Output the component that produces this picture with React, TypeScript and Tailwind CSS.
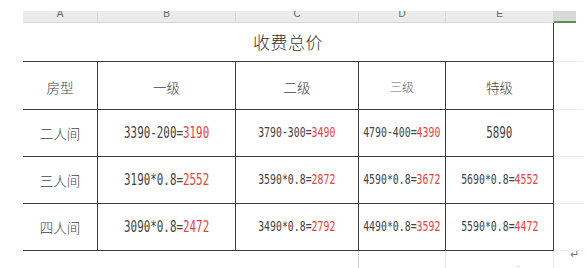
import React from 'react';

const line = 'border-[#3e3e3e]';

const cols = ['A', 'B', 'C', 'D', 'E'];
const widths = ['w-[75px]', 'w-[138px]', 'w-[123px]', 'w-[87px]', 'w-[108px]'];

type Cell = { base: string; result?: string; big?: boolean };

const rows: { label: string; cells: Cell[] }[] = [
  {
    label: '二人间',
    cells: [
      { base: '3390-200=', result: '3190', big: true },
      { base: '3790-300=', result: '3490' },
      { base: '4790-400=', result: '4390' },
      { base: '5890', big: true },
    ],
  },
  {
    label: '三人间',
    cells: [
      { base: '3190*0.8=', result: '2552', big: true },
      { base: '3590*0.8=', result: '2872' },
      { base: '4590*0.8=', result: '3672' },
      { base: '5690*0.8=', result: '4552' },
    ],
  },
  {
    label: '四人间',
    cells: [
      { base: '3090*0.8=', result: '2472', big: true },
      { base: '3490*0.8=', result: '2792' },
      { base: '4490*0.8=', result: '3592' },
      { base: '5590*0.8=', result: '4472' },
    ],
  },
];

const Num: React.FC<{ cell: Cell }> = ({ cell }) => (
  <span
    className={`inline-block whitespace-nowrap scale-x-[0.68] text-[#444] font-['DejaVu_Sans_Mono',monospace] ${
      cell.big ? 'text-[16px]' : 'text-[14.5px]'
    }`}
  >
    {cell.base}
    {cell.result && <span className="text-[#e8413f]">{cell.result}</span>}
  </span>
);

const App: React.FC = () => {
  return (
    <div className="w-[587px] h-[268px] bg-white overflow-hidden relative pt-[11px] font-['Noto_Sans_CJK_SC',sans-serif] font-light">
      {/* column letters */}
      <div className="flex pl-[23px]">
        {cols.map((c, i) => (
          <div
            key={c}
            className={`${widths[i]} h-[12px] overflow-hidden bg-[#ebebeb] border-b border-r border-[#d6d6d6] flex justify-center`}
          >
            <span className="text-[10px] leading-[10px] -translate-y-[2px] text-[#666] font-['Liberation_Sans',sans-serif]">
              {c}
            </span>
          </div>
        ))}
        <div className="w-[22px] h-[12px] bg-[#d9d9d9] border-b-2 border-[#5e9150]" />
      </div>

      {/* title */}
      <div className="flex pl-[23px]">
        <div className={`w-[531px] h-[39px] border-b border-r ${line} flex items-center justify-center`}>
          <span className="text-[17px] text-[#333] tracking-[0.5px]">收费总价</span>
        </div>
        <div className="w-[29px] border-b border-[#ececec]" />
      </div>

      {/* header row */}
      <div className="flex pl-[23px] h-[48px]">
        {['房型', '一级', '二级', '三级', '特级'].map((h, i) => (
          <div
            key={h}
            className={`${widths[i]} border-b border-r ${line} flex items-center justify-center pt-[3px]`}
          >
            <span className={`${i === 3 ? 'text-[12px] text-[#666]' : 'text-[13.5px] text-[#444]'}`}>{h}</span>
          </div>
        ))}
        <div className="w-[29px] border-b border-[#ececec]" />
      </div>

      {rows.map((r) => (
        <div key={r.label} className="flex pl-[23px] h-[47px]">
          <div className={`${widths[0]} border-b border-r ${line} flex items-center justify-center`}>
            <span className="text-[13.5px] text-[#444]">{r.label}</span>
          </div>
          {r.cells.map((c, i) => (
            <div
              key={i}
              className={`${widths[i + 1]} border-b border-r ${line} flex items-center justify-center`}
            >
              <Num cell={c} />
            </div>
          ))}
          <div className="w-[29px] border-b border-[#ececec]" />
        </div>
      ))}

      {/* faint grid below */}
      <div className="flex pl-[23px] h-[20px]">
        <div className="w-[336px] border-r border-[#cfcfcf]" />
        <div className="w-[87px] border-r border-[#e6e6e6]" />
        <div className="w-[108px] border-r border-[#e6e6e6]" />
        <div className="w-[29px] flex items-start justify-end pr-[4px]">
          <span className="text-[11px] leading-[11px] text-[#777] -mt-[2px] font-['DejaVu_Sans',sans-serif]">↵</span>
        </div>
      </div>
      <span className="absolute left-[517px] top-[264px] text-[8px] leading-[4px] text-[#888]">-</span>
    </div>
  );
};

export default App;
